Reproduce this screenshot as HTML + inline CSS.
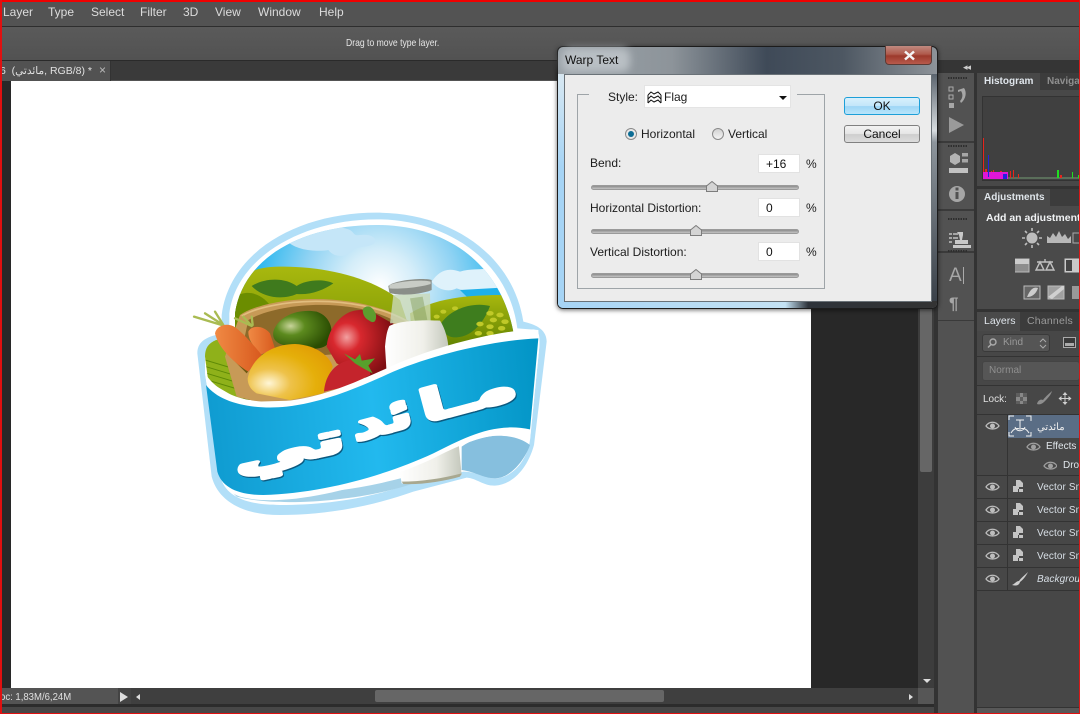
<!DOCTYPE html>
<html><head><meta charset="utf-8"><style>
html,body{margin:0;padding:0;width:1080px;height:714px;overflow:hidden;background:#535353}
body{position:relative;font-family:"Liberation Sans","Noto Sans CJK SC",sans-serif;font-size:11px;color:#e4e4e4}
.b{position:absolute;box-sizing:border-box}
.t{position:absolute;white-space:nowrap;line-height:14px}
.m{font-size:12px;top:5px;color:#dcdcdc}
.d{color:#1c1c1c;font-size:12px}
.in{position:absolute;background:#fff;width:42px;height:19px;left:758px;box-sizing:border-box;border:1px solid #e2e2e2;color:#111;font-size:12px;line-height:18px;padding-left:7px}
.tr{position:absolute;left:591px;width:208px;height:5px;border-radius:3px;background:linear-gradient(#8c8c8c,#c4c4c4);border:1px solid #9a9a9a;box-sizing:border-box}
.sep{position:absolute;left:977px;right:1px;height:1px;background:#333}
.v{position:absolute;left:1037px;font-size:10px;color:#d8dfe6;white-space:nowrap;line-height:12px;letter-spacing:.1px}
</style></head><body>
<!-- chrome -->
<div class="b" style="left:0;top:0;width:1080px;height:26px;background:#535353"></div>
<div class="b" style="left:0;top:26px;width:1080px;height:1px;background:#2e2e2e"></div>
<div class="b" style="left:0;top:27px;width:1080px;height:33px;background:linear-gradient(#5a5a5a,#525252)"></div>
<div class="b" style="left:0;top:60px;width:934px;height:20px;background:#3a3a3a;border-top:1px solid #2a2a2a"></div>
<div class="b" style="left:0;top:61px;width:111px;height:20px;background:#525252;border-right:1px solid #333"></div>
<span class="t m" style="left:3px">Layer</span><span class="t m" style="left:48px">Type</span><span class="t m" style="left:91px">Select</span><span class="t m" style="left:140px">Filter</span><span class="t m" style="left:183px">3D</span><span class="t m" style="left:215px">View</span><span class="t m" style="left:258px">Window</span><span class="t m" style="left:319px">Help</span>
<span class="t" style="left:346px;top:36px;font-size:10.5px;color:#e6e6e6;transform:scaleX(.82);transform-origin:0 0">Drag to move type layer.</span>
<span class="t" style="left:0;top:64px;font-size:10.5px;color:#e0e0e0;width:111px">6&nbsp;&nbsp;(مائدتي, RGB/8) *</span>
<span class="t" style="left:99px;top:63px;font-size:12px;color:#bbb">×</span>
<!-- canvas -->
<div class="b" style="left:0;top:81px;width:918px;height:607px;background:#282828"></div>
<div class="b" style="left:11px;top:81px;width:800px;height:607px;background:#fff"></div>
<div class="b" style="left:918px;top:81px;width:16px;height:607px;background:#3d3d3d"></div>
<div class="b" style="left:920px;top:120px;width:12px;height:352px;background:#666;border-radius:2px"></div>
<div class="b" style="left:923px;top:679px;width:0;height:0;border:4px solid transparent;border-top:4px solid #ddd;border-bottom:0"></div>
<!-- status -->
<div class="b" style="left:0;top:688px;width:934px;height:16px;background:#3f3f3f"></div>
<div class="b" style="left:0;top:688px;width:118px;height:16px;background:#545454"></div>
<div class="b" style="left:118px;top:688px;width:13px;height:16px;background:#444"></div>
<div class="b" style="left:120px;top:692px;width:0;height:0;border:5px solid transparent;border-left:8px solid #ddd;border-right:0"></div>
<div class="b" style="left:136px;top:694px;width:0;height:0;border:3px solid transparent;border-right:4px solid #ddd;border-left:0"></div>
<div class="b" style="left:909px;top:694px;width:0;height:0;border:3px solid transparent;border-left:4px solid #ddd;border-right:0"></div>
<div class="b" style="left:375px;top:690px;width:289px;height:12px;background:#666;border-radius:2px"></div>
<div class="b" style="left:918px;top:688px;width:16px;height:16px;background:#565656"></div>
<span class="t" style="left:0;top:690px;font-size:10.5px;color:#e0e0e0;transform:scaleX(.91);transform-origin:0 0">oc: 1,83M/6,24M</span>
<div class="b" style="left:0;top:704px;width:934px;height:3px;background:#2c2c2c"></div>
<div class="b" style="left:0;top:707px;width:934px;height:6px;background:#474747"></div>

<!-- logo -->
<svg style="position:absolute;left:180px;top:200px" width="380" height="330" viewBox="0 0 1140 990">
<defs>
<radialGradient id="sky" gradientUnits="userSpaceOnUse" cx="600" cy="260" r="390"><stop offset="0" stop-color="#fff"/><stop offset=".28" stop-color="#d4edf9"/><stop offset=".6" stop-color="#8ed2f3"/><stop offset="1" stop-color="#1fb4ee"/></radialGradient>
<linearGradient id="h1" x1="0" y1="0" x2="0" y2="1"><stop offset="0" stop-color="#a8b80e"/><stop offset="1" stop-color="#5d7f00"/></linearGradient>
<linearGradient id="ban" gradientUnits="userSpaceOnUse" x1="80" y1="700" x2="1080" y2="600"><stop offset="0" stop-color="#0f9bd0"/><stop offset=".5" stop-color="#22b9ee"/><stop offset="1" stop-color="#0395c6"/></linearGradient>
<radialGradient id="or" cx=".25" cy=".7" r=".85"><stop offset="0" stop-color="#fff6d6"/><stop offset=".3" stop-color="#eec24a"/><stop offset=".65" stop-color="#e5af0a"/><stop offset="1" stop-color="#e19c04"/></radialGradient>
<radialGradient id="ap" cx=".3" cy=".4" r=".7"><stop offset="0" stop-color="#f2a0a0"/><stop offset=".3" stop-color="#d8282e"/><stop offset="1" stop-color="#7e0e12"/></radialGradient>
<radialGradient id="gr" cx=".3" cy=".4" r=".7"><stop offset="0" stop-color="#c8d49a"/><stop offset=".35" stop-color="#5c8a1e"/><stop offset="1" stop-color="#2a4c02"/></radialGradient>
<linearGradient id="car" x1="0" y1="0" x2="1" y2="0"><stop offset="0" stop-color="#f08a44"/><stop offset="1" stop-color="#d85a1e"/></linearGradient>
<linearGradient id="milk" x1="0" y1="0" x2="1" y2="0"><stop offset="0" stop-color="#fff"/><stop offset=".6" stop-color="#f0f0ea"/><stop offset="1" stop-color="#c4c8bc"/></linearGradient>
<clipPath id="dome"><path d="M165 340C190 170 370 75 590 75C800 75 960 190 1000 395L800 440L620 520L400 600L190 600L165 500Z"/></clipPath>
<clipPath id="lf"><path d="M75 470C75 430 100 415 165 410L230 600L180 600L85 545Z"/></clipPath>
</defs>
<path fill="#b2dff8" d="M125 345C150 150 360 38 590 38C820 38 1000 170 1030 365C1060 372 1100 385 1100 425L1062 735C1040 815 990 855 945 857C910 858 890 835 860 833L700 875C560 925 420 945 300 945C190 945 115 905 95 830L52 460C52 420 85 410 125 400Z"/>
<path fill="#fff" d="M148 340C170 170 370 58 590 58C800 58 985 180 1012 385L1075 390L1078 440L1050 720C1040 790 990 835 945 835C910 835 890 815 850 815L680 855C550 900 420 915 300 915C200 915 135 890 122 830L75 520L75 470L148 400Z"/>
<g clip-path="url(#lf)"><rect x="70" y="410" width="170" height="200" fill="#8fb11a"/>
<path d="M75 480l100 30M78 500l100 30M80 520l100 30M82 540l100 30" stroke="#5e8a06" stroke-width="3" fill="none"/></g>
<g clip-path="url(#dome)">
<rect x="150" y="60" width="860" height="560" fill="url(#sky)"/>
<path fill="#c5e6f8" d="M320 122C370 90 470 70 510 90C525 100 520 108 540 105C580 100 595 120 580 132C560 145 530 135 515 155C490 175 460 170 445 150C420 155 350 155 320 122Z"/>
<path fill="#dff2fb" d="M755 245C775 215 800 200 840 215C870 205 900 210 925 205L980 210L985 265C930 260 880 285 830 265C800 280 770 265 755 245Z"/>
<path fill="#1fb0ea" d="M840 270L980 262L990 290L860 290Z" />
<path fill="url(#h1)" d="M150 320C175 215 220 200 310 200C430 200 570 230 660 300L700 420L400 600H150Z"/>
<path fill="#6b8d00" d="M150 300C200 260 250 280 280 330L200 420H150Z"/>
<path fill="#3f7a1d" d="M215 258C260 230 320 235 350 258C375 240 430 235 460 250C430 270 395 285 350 282C310 300 250 295 215 258Z"/>
<path fill="url(#h1)" d="M690 340C780 285 900 285 990 285L1010 450H700Z"/>
<path fill="#3e7d1e" d="M780 375C810 325 880 305 930 318C915 360 880 410 830 412C805 415 785 395 780 375Z"/>
<g fill="#c0c928"><ellipse cx="930" cy="340" rx="11" ry="7"/><ellipse cx="960" cy="345" rx="11" ry="7"/><ellipse cx="900" cy="372" rx="11" ry="7"/><ellipse cx="940" cy="360" rx="11" ry="7"/><ellipse cx="975" cy="365" rx="11" ry="7"/><ellipse cx="930" cy="380" rx="11" ry="7"/><ellipse cx="965" cy="385" rx="11" ry="7"/><ellipse cx="895" cy="400" rx="11" ry="7"/><ellipse cx="930" cy="400" rx="11" ry="7"/><ellipse cx="790" cy="335" rx="9" ry="6"/><ellipse cx="825" cy="325" rx="9" ry="6"/><ellipse cx="770" cy="350" rx="9" ry="6"/></g>
</g>
<!-- basket -->
<path fill="#c79a57" d="M180 345C260 290 520 265 690 365L640 520L400 600L230 605L170 590L135 470Z"/>
<path fill="#8d6a2a" d="M205 360C290 310 500 290 640 360L620 450L250 480L190 430Z"/>
<path fill="none" stroke="#e2bd7f" stroke-width="5" d="M185 348C270 298 520 275 685 365"/>
<path fill="#6e5a12" d="M165 430L215 500L200 520L150 470Z"/>
<path fill="url(#gr)" d="M280 395C295 345 360 325 410 335C455 350 465 400 445 430C425 455 375 445 340 440C300 437 275 425 280 395Z"/>
<path fill="url(#ap)" d="M440 440C445 380 490 330 540 330C575 325 610 360 640 370L630 510L560 535L470 490Z"/>
<path fill="#5d9d2e" d="M548 328C560 312 580 318 588 345C590 365 580 372 568 362C555 355 548 345 548 328Z"/>
<!-- carrots -->
<g fill="none" stroke="#a9bb52" stroke-width="7" stroke-linecap="round"><path d="M42 350L125 375M75 340L125 372M105 335L130 375M165 355L215 378M190 350L215 378M215 350L218 375"/></g>
<path fill="url(#car)" d="M205 395C215 375 250 375 270 400L285 445L240 465C225 440 205 425 205 395Z"/>
<path fill="url(#car)" d="M105 400C110 375 145 365 170 385C195 405 225 440 245 465L205 515C165 490 115 445 105 400Z"/>
<!-- orange -->
<path fill="url(#or)" d="M203 535C215 470 280 432 345 432C410 435 450 470 458 500L430 580L330 600L230 580C213 570 203 555 203 535Z"/>
<!-- strawberry -->
<path fill="#c4242c" d="M432 575C435 530 460 490 510 480C545 482 575 500 570 525L500 560Z"/>
<path fill="#57a02c" d="M492 460L525 478L540 462L545 482L585 475L565 497L578 520L550 505L525 490Z"/>
<!-- bottle -->
<path fill="#c9d8b8" d="M640 285L750 280L752 365L630 370Z" opacity=".8"/>
<path fill="#6e8a3a" d="M690 295L728 290L742 360L705 365Z" opacity=".35"/>
<path fill="url(#milk)" d="M628 378C660 360 740 360 780 362C795 385 805 420 805 445L620 520L615 440C618 410 620 395 628 378Z"/>
<path fill="#8a8e88" d="M625 258C640 240 735 232 755 240L755 270C720 285 650 288 628 278Z"/>
<path fill="#c8ccc6" d="M628 255C660 243 730 238 752 245L752 252C720 262 660 268 628 265Z"/>
<!-- lower bottle & lobe -->
<path fill="#86bfde" d="M845 740C900 700 1000 695 1050 735C1030 790 985 835 945 835C910 835 885 815 845 810Z"/>
<path fill="#a6d2e8" d="M130 850C300 900 500 880 680 830L700 850C560 900 300 925 170 890Z"/>
<path fill="url(#milk)" d="M655 790L835 720L845 825C790 845 720 855 665 850Z"/>
<path fill="#a8a890" d="M665 845C720 845 790 835 845 820L840 830C790 845 720 855 670 852Z"/>
<!-- white band + banner -->
<path fill="#fff" d="M75 520C120 590 210 610 300 605C420 595 520 550 620 505C760 440 940 395 1060 388C1078 390 1080 410 1078 440L1050 720C950 680 850 730 760 775C600 850 320 930 180 890C140 875 125 850 122 830Z"/>
<path fill="url(#ban)" d="M78 555C120 610 220 630 320 620C440 605 540 560 640 515C770 460 950 420 1075 415L1050 688C940 665 850 715 760 760C620 825 430 880 250 885C170 885 125 860 112 815Z"/>
<!-- arabic -->
<g font-family="'DejaVu Sans','Noto Sans CJK SC',sans-serif" font-weight="bold" text-anchor="middle" direction="rtl">
<g fill="#0b5a80" stroke="#0b5a80" stroke-width="11" stroke-linejoin="round">
<text transform="translate(878 634) rotate(-15) scale(1.7 1)" font-size="130">مـا</text>
<text transform="translate(618 703) rotate(-15) scale(1.55 1)" font-size="125">ئد</text>
<text transform="translate(338 790) rotate(-12) scale(1.95 1)" font-size="125">تي</text>
</g>
<g fill="#fff" stroke="#fff" stroke-width="11" stroke-linejoin="round">
<text transform="translate(875 630) rotate(-15) scale(1.7 1)" font-size="130">مـا</text>
<text transform="translate(615 699) rotate(-15) scale(1.55 1)" font-size="125">ئد</text>
<text transform="translate(335 786) rotate(-12) scale(1.95 1)" font-size="125">تي</text>
</g>
</g>
</svg>

<!-- right panels -->
<div class="b" style="left:934px;top:60px;width:146px;height:654px;background:#333"></div>
<div class="b" style="left:937px;top:60px;width:143px;height:13px;background:#353535"></div>
<span class="t" style="left:963px;top:60px;font-size:9px;color:#ccc;letter-spacing:-1px">◂◂</span>
<div class="b" style="left:938px;top:73px;width:36px;height:641px;background:#525252"></div>
<div class="b" style="left:938px;top:141px;width:36px;height:2px;background:#3a3a3a"></div>
<div class="b" style="left:938px;top:209px;width:36px;height:2px;background:#3a3a3a"></div>
<div class="b" style="left:938px;top:251px;width:36px;height:2px;background:#3a3a3a"></div>
<div class="b" style="left:938px;top:320px;width:36px;height:1px;background:#3a3a3a"></div>
<svg style="position:absolute;left:938px;top:73px" width="36" height="200" viewBox="0 0 36 200" fill="#a6a6a6">
<path d="M10 5h19M10 73h19M10 146h19 M10 178h19" stroke="#2e2e2e" stroke-width="2" stroke-dasharray="1.5 1"/>
<rect x="11" y="14" width="4" height="4" fill="none" stroke="#aaa"/><rect x="11" y="22" width="4" height="4" fill="none" stroke="#aaa"/><rect x="11" y="30" width="5" height="5"/>
<path d="M20 17l6-2c3 4 2 11-3 15l-1-2c3-3 3-7 1-10l-3 1z"/>
<path d="M11 44l15 8-15 8z" fill="#9a9a9a"/>
<path d="M12 83l5-3 5 3v6l-5 3-5-3z" fill="#ddd" opacity=".7"/><rect x="24" y="80" width="6" height="3.5"/><rect x="24" y="86" width="6" height="3.5"/><rect x="11" y="95" width="19" height="5" fill="#c2c2c2"/>
<circle cx="19" cy="121" r="8"/><rect x="17.500" y="119" width="3" height="7" fill="#525252"/><rect x="17.500" y="114.500" width="3" height="3" fill="#525252"/>
<rect x="11" y="160" width="3" height="2"/><rect x="15" y="160" width="5" height="2"/><rect x="11" y="164" width="3" height="2"/><rect x="15" y="164" width="5" height="2"/><rect x="11" y="168" width="3" height="2"/>
<path d="M19 159h6v3l-1 5h6v4H17v-4h5l-1-5z M15 172h18v3H15z" fill="#c8c8c8"/>
</svg>
<span class="t" style="left:949px;top:266px;font-size:19px;line-height:20px;color:#a6a6a6">A</span><div class="b" style="left:963px;top:267px;width:1px;height:17px;background:#aaa"></div>
<span class="t" style="left:949px;top:294px;font-size:17px;line-height:20px;color:#a6a6a6;font-weight:bold">¶</span>

<!-- histogram -->
<div class="b" style="left:977px;top:90px;width:102px;height:97px;background:#484848"></div>
<div class="b" style="left:977px;top:73px;width:63px;height:18px;background:#484848"></div>
<div class="b" style="left:1040px;top:73px;width:39px;height:17px;background:#3c3c3c"></div>
<span class="t" style="left:984px;top:75px;font-size:10px;font-weight:bold;color:#e0e6ec">Histogram</span>
<span class="t" style="left:1047px;top:75px;font-size:10px;font-weight:bold;color:#8f8f8f">Navigator</span>
<div class="b" style="left:982px;top:96px;width:97px;height:85px;background:#404040;border:1px solid #333;border-right:0"></div>
<svg style="position:absolute;left:983px;top:97px" width="96" height="83" viewBox="0 0 96 83">
<rect x="0" y="80" width="96" height="2" fill="#5a6e5a"/>
<g fill="#e8241c"><rect x="0" y="41" width="1" height="41"/><rect x="2" y="72" width="2" height="9"/><rect x="8" y="74" width="1" height="8"/><rect x="10" y="73" width="1" height="8"/><rect x="14" y="75" width="1" height="6"/><rect x="17" y="74" width="2" height="7"/><rect x="24" y="76" width="1" height="5"/><rect x="27" y="74" width="1" height="7"/><rect x="30" y="73" width="1" height="8"/><rect x="35" y="77" width="1" height="4"/><rect x="77" y="78" width="2" height="3"/></g>
<rect x="0" y="75" width="25" height="7" fill="#e016d8"/><rect x="5" y="58" width="1" height="22" fill="#2222dd"/><rect x="20" y="77" width="4" height="5" fill="#2222dd"/>
<g fill="#1fe01f"><rect x="74" y="73" width="2" height="8"/><rect x="89" y="75" width="1" height="6"/><rect x="95" y="78" width="1" height="3"/></g>
</svg>
<!-- adjustments -->
<div class="b" style="left:977px;top:186px;width:102px;height:3px;background:#333"></div>
<div class="b" style="left:977px;top:189px;width:102px;height:121px;background:#3c3c3c"></div>
<div class="b" style="left:977px;top:189px;width:73px;height:18px;background:#4a4a4a"></div>
<div class="b" style="left:977px;top:206px;width:102px;height:103px;background:#4a4a4a"></div>
<span class="t" style="left:984px;top:191px;font-size:10px;font-weight:bold;color:#dfe5ea">Adjustments</span>
<span class="t" style="left:986px;top:211px;font-size:10.5px;font-weight:bold;color:#f0f2f4">Add an adjustment</span>
<svg style="position:absolute;left:1015px;top:225px" width="65" height="80" viewBox="0 0 65 80">
<circle cx="17" cy="13" r="5.500" fill="#bdbdbd"/><path d="M17 3v3M17 20v3M7 13h3M24 13h3M10 6l2 2M22 18l2 2M10 20l2-2M22 8l2-2" stroke="#bdbdbd" stroke-width="1.600"/>
<path d="M32 18v-7l3 2 3-5 3 4 3-6 3 6 3-3 3 5 3-3v7z" fill="#b8b8b8"/>
<rect x="58" y="8" width="8" height="10" fill="none" stroke="#aaa"/>
<rect x="-3" y="34" width="17" height="13" fill="#8d8d8d" stroke="#bbb"/><rect x="-3" y="34" width="17" height="5" fill="#ccc"/>
<path d="M30 34v3M22 37h16M25 37l-4 8h8zM35 37l-4 8h8z" stroke="#c0c0c0" fill="none" stroke-width="1.400"/>
<rect x="50" y="34" width="15" height="13" fill="#c8c8c8" stroke="#ccc"/><rect x="51" y="35" width="6" height="11" fill="#444"/>
<rect x="9" y="61" width="16" height="13" fill="#666" stroke="#bbb"/><path d="M12 72c4-10 8-10 11-9-2 6-6 9-11 9z" fill="#ccc"/>
<rect x="33" y="61" width="16" height="13" fill="#a0a0a0" stroke="#bbb"/><path d="M33 72l14-11h2v3l-12 10z" fill="#d0d0d0"/>
<rect x="57" y="61" width="10" height="13" fill="#999"/>
</svg>
<!-- layers -->
<div class="b" style="left:977px;top:309px;width:102px;height:3px;background:#333"></div>
<div class="b" style="left:977px;top:312px;width:102px;height:19px;background:#3c3c3c"></div>
<div class="b" style="left:977px;top:312px;width:43px;height:19px;background:#4a4a4a"></div>
<div class="b" style="left:977px;top:331px;width:102px;height:376px;background:#474747"></div>
<span class="t" style="left:984px;top:314px;font-size:10.5px;color:#e0e6ec">Layers</span>
<span class="t" style="left:1027px;top:314px;font-size:10.5px;color:#9a9a9a;letter-spacing:.2px">Channels</span>
<div class="b" style="left:982px;top:334px;width:68px;height:18px;background:#555;border:1px solid #3a3a3a;border-radius:3px"></div>
<span class="t" style="left:1003px;top:336px;font-size:10px;color:#999">Kind</span>
<svg style="position:absolute;left:986px;top:337px" width="68" height="14" fill="none" stroke="#aaa" stroke-width="1.400"><circle cx="7" cy="5" r="3"/><path d="M5 7.500l-3 3"/><path d="M54 5l3-3 3 3M54 8l3 3 3-3" stroke-width="1"/></svg>
<div class="b" style="left:1063px;top:337px;width:13px;height:11px;background:#3a3a3a;border:1px solid #aaa"></div>
<div class="b" style="left:1065px;top:343px;width:9px;height:3px;background:#aaa"></div>
<div class="sep" style="top:356px"></div>
<div class="b" style="left:982px;top:361px;width:98px;height:20px;background:#565656;border:1px solid #444;border-radius:3px"></div>
<span class="t" style="left:989px;top:364px;font-size:10px;color:#8f8f8f">Normal</span>
<div class="sep" style="top:385px"></div>
<span class="t" style="left:983px;top:393px;font-size:10px;color:#e0e0e0">Lock:</span>
<svg style="position:absolute;left:1015px;top:390px" width="65" height="18" viewBox="0 0 65 18">
<rect x="1" y="3" width="11" height="11" fill="#888"/><path d="M1 3h4v4H1zM8 3h4v4H8zM5 7h3v4H5zM1 11h4v3H1zM8 11h4v3H8z" fill="#5e5e5e"/>
<path d="M22 14c1-4 4-5 6-4 3-4 7-7 9-9-1 4-5 8-8 11-2 2-5 3-7 2z" fill="#8e8e8e"/>
<path d="M50 2l2.500 3h-2v3h3v-2l3 2.500-3 2.500v-2h-3v3h2l-2.500 3-2.500-3h2v-3h-3v2l-3-2.500 3-2.500v2h3v-3h-2z" fill="#cfcfcf"/>
</svg>
<div class="sep" style="top:414px"></div>
<div class="b" style="left:1008px;top:415px;width:71px;height:23px;background:#5a6d85"></div>
<div class="b" style="left:1007px;top:415px;width:1px;height:175px;background:#333"></div>
<svg style="position:absolute;left:1008px;top:415px" width="24" height="22" viewBox="0 0 24 22" fill="none" stroke="#f2f2f2"><path d="M1 5V1h5M18 1h5v5M1 17v4h5M23 17v4h-5"/><path d="M8 5h8M12 5v8M7 12c2 5 8 5 10 0M3 18c3-5 6-5 9-4 3-1 6-1 9 4" stroke-width="1"/></svg>
<span class="t" style="left:1037px;top:421px;font-size:10px;color:#eee;line-height:13px">مائدتي</span>
<span class="t" style="left:1046px;top:440px;font-size:10px;color:#dfe5ea;line-height:13px">Effects</span>
<span class="t" style="left:1063px;top:459px;font-size:10px;color:#dfe5ea;line-height:13px">Drop S</span>
<div class="sep" style="top:475px"></div><div class="sep" style="top:498px"></div><div class="sep" style="top:521px"></div><div class="sep" style="top:544px"></div><div class="sep" style="top:567px"></div><div class="sep" style="top:590px"></div>
<span class="v" style="top:482px">Vector Smart</span><span class="v" style="top:505px">Vector Smart</span><span class="v" style="top:528px">Vector Smart</span><span class="v" style="top:551px">Vector Smart</span>
<span class="v" style="top:574px;font-style:italic">Background</span>
<svg style="position:absolute;left:985px;top:420px" width="72" height="170" viewBox="0 0 72 170" fill="none">
<g stroke="#bdbdbd" stroke-width="1.300"><path d="M1 6c3-5 10-5 13 0-3 4-10 4-13 0z"/><circle cx="7.500" cy="6" r="2.500" fill="#bdbdbd" stroke="none"/></g>
<g stroke="#9f9f9f" stroke-width="1.300" transform="translate(41,21)"><path d="M1 6c3-5 10-5 13 0-3 4-10 4-13 0z"/><circle cx="7.500" cy="6" r="2.500" fill="#9f9f9f" stroke="none"/></g>
<g stroke="#9f9f9f" stroke-width="1.300" transform="translate(58,40)"><path d="M1 6c3-5 10-5 13 0-3 4-10 4-13 0z"/><circle cx="7.500" cy="6" r="2.500" fill="#9f9f9f" stroke="none"/></g>
<g stroke="#bdbdbd" stroke-width="1.300" transform="translate(0,61)"><path d="M1 6c3-5 10-5 13 0-3 4-10 4-13 0z"/><circle cx="7.500" cy="6" r="2.500" fill="#bdbdbd" stroke="none"/></g>
<g stroke="#bdbdbd" stroke-width="1.300" transform="translate(0,84)"><path d="M1 6c3-5 10-5 13 0-3 4-10 4-13 0z"/><circle cx="7.500" cy="6" r="2.500" fill="#bdbdbd" stroke="none"/></g>
<g stroke="#bdbdbd" stroke-width="1.300" transform="translate(0,107)"><path d="M1 6c3-5 10-5 13 0-3 4-10 4-13 0z"/><circle cx="7.500" cy="6" r="2.500" fill="#bdbdbd" stroke="none"/></g>
<g stroke="#bdbdbd" stroke-width="1.300" transform="translate(0,130)"><path d="M1 6c3-5 10-5 13 0-3 4-10 4-13 0z"/><circle cx="7.500" cy="6" r="2.500" fill="#bdbdbd" stroke="none"/></g>
<g stroke="#bdbdbd" stroke-width="1.300" transform="translate(0,153)"><path d="M1 6c3-5 10-5 13 0-3 4-10 4-13 0z"/><circle cx="7.500" cy="6" r="2.500" fill="#bdbdbd" stroke="none"/></g>
</svg>
<svg style="position:absolute;left:1012px;top:478px" width="14" height="112" viewBox="0 0 14 112" fill="#c4c4c4">
<path d="M4 2h4l3 3v4H7v2H4zM1 8h5v6H1zM7 11h4v3H7z"/>
<path transform="translate(0,23)" d="M4 2h4l3 3v4H7v2H4zM1 8h5v6H1zM7 11h4v3H7z"/>
<path transform="translate(0,46)" d="M4 2h4l3 3v4H7v2H4zM1 8h5v6H1zM7 11h4v3H7z"/>
<path transform="translate(0,69)" d="M4 2h4l3 3v4H7v2H4zM1 8h5v6H1zM7 11h4v3H7z"/>
</svg>
<svg style="position:absolute;left:1010px;top:570px" width="20" height="18" viewBox="0 0 20 18" fill="#cfcfcf"><path d="M18 2c-3 3-7 6-9 9-3 0-4 3-7 4 3 1 7 1 8-3 3-2 6-6 8-10z"/></svg>
<div class="b" style="left:977px;top:707px;width:102px;height:6px;background:#585858;border-top:1px solid #333"></div>

<!-- dialog -->
<div class="b" style="left:557px;top:46px;width:381px;height:263px;border-radius:6px;border:1px solid #1c1c1c;background:linear-gradient(90deg,#9aa2a8 0,#8d949a 30%,#3f4a58 55%,#4d5762 75%,#8d9399 100%);box-shadow:0 1px 5px rgba(0,0,0,.6)"></div>
<div class="b" style="left:558px;top:74px;width:7px;height:234px;background:linear-gradient(#d8e8f2,#a6d4f5 40%,#a6d4f5);border-radius:0 0 0 5px"></div>
<div class="b" style="left:558px;top:301px;width:379px;height:7px;background:linear-gradient(90deg,#a6d4f5 0,#c4e2f4 60%,#2e333a 66%,#333 100%);border-radius:0 0 5px 5px"></div>
<div class="b" style="left:932px;top:74px;width:5px;height:227px;background:linear-gradient(#5b646e,#d8dde0 25%,#8d959c 30%,#3a4149 100%)"></div>
<div class="b" style="left:562px;top:48px;width:68px;height:24px;background:#b9bfc4;filter:blur(4px);border-radius:8px"></div>
<span class="t" style="left:565px;top:53px;font-size:12px;color:#111">Warp Text</span>
<div class="b" style="left:885px;top:46px;width:47px;height:19px;background:linear-gradient(#c08a80 0,#b05a4c 45%,#9c3a2c 55%,#b85a4c 100%);border:1px solid #5c3a34;border-top:0;border-radius:0 0 4px 4px"></div>
<svg style="position:absolute;left:902px;top:50px" width="15" height="11"><path d="M3 1.500l9 8M12 1.500l-9 8" stroke="#f4f4f4" stroke-width="2.500"/></svg>
<div class="b" style="left:564px;top:74px;width:368px;height:228px;background:#ececec;border:1px solid #6a7278"></div>
<div class="b" style="left:577px;top:94px;width:248px;height:195px;border:1px solid #9ea4a8"></div>
<div class="b" style="left:589px;top:90px;width:208px;height:8px;background:#ececec"></div>
<span class="t d" style="left:608px;top:90px">Style:</span>
<div class="b" style="left:644px;top:85px;width:147px;height:23px;background:#fff;border:1px solid #e4e4e4"></div>
<svg style="position:absolute;left:647px;top:90px" width="16" height="15" fill="none" stroke="#111"><path d="M1 5l3-3 3 2 4-2 3 3M1 9l3-3 3 2 4-2 3 3M1 13l3-3 3 2 4-2 3 3M1 5v8M14 5v8"/></svg>
<span class="t d" style="left:664px;top:90px">Flag</span>
<div class="b" style="left:779px;top:96px;width:0;height:0;border:4px solid transparent;border-top:4px solid #111;border-bottom:0"></div>
<div class="b" style="left:625px;top:128px;width:12px;height:12px;border-radius:50%;background:#e8e8e8;border:1px solid #8a8a8a"></div>
<div class="b" style="left:628px;top:131px;width:6px;height:6px;border-radius:50%;background:#0c6c94"></div>
<span class="t d" style="left:641px;top:127px">Horizontal</span>
<div class="b" style="left:712px;top:128px;width:12px;height:12px;border-radius:50%;background:linear-gradient(#d2d2d2,#f4f4f4);border:1px solid #8a8a8a"></div>
<span class="t d" style="left:728px;top:127px">Vertical</span>
<span class="t d" style="left:590px;top:156px">Bend:</span>
<div class="in" style="top:154px">+16</div><span class="t d" style="left:806px;top:157px">%</span>
<div class="tr" style="top:185px"></div>
<svg style="position:absolute;left:706px;top:181px" width="12" height="11"><path d="M.5 10.500V5L6 .5 11.500 5v5.500z" fill="#d4d4d4" stroke="#7d7d7d"/></svg>
<span class="t d" style="left:590px;top:201px">Horizontal Distortion:</span>
<div class="in" style="top:198px">0</div><span class="t d" style="left:806px;top:201px">%</span>
<div class="tr" style="top:229px"></div>
<svg style="position:absolute;left:690px;top:225px" width="12" height="11"><path d="M.5 10.500V5L6 .5 11.500 5v5.500z" fill="#d4d4d4" stroke="#7d7d7d"/></svg>
<span class="t d" style="left:590px;top:245px">Vertical Distortion:</span>
<div class="in" style="top:242px">0</div><span class="t d" style="left:806px;top:245px">%</span>
<div class="tr" style="top:273px"></div>
<svg style="position:absolute;left:690px;top:269px" width="12" height="11"><path d="M.5 10.500V5L6 .5 11.500 5v5.500z" fill="#d4d4d4" stroke="#7d7d7d"/></svg>
<div class="b" style="left:844px;top:97px;width:76px;height:18px;border:1px solid #1d9fd8;border-radius:3px;background:linear-gradient(#d8f0fc 0,#c2e6fa 50%,#9ed6f6 52%,#b8e4fa 100%);color:#111;text-align:center;font-size:12px;line-height:16px">OK</div>
<div class="b" style="left:844px;top:125px;width:76px;height:18px;border:1px solid #808080;border-radius:3px;background:linear-gradient(#f2f2f2 0,#e6e6e6 48%,#cecece 52%,#dcdcdc 100%);color:#111;text-align:center;font-size:12px;line-height:17px">Cancel</div>

<!-- red frame -->
<div class="b" style="left:0;top:0;width:1080px;height:2px;background:#f00000"></div>
<div class="b" style="left:0;top:0;width:2px;height:714px;background:#e01010"></div>
<div class="b" style="left:1079px;top:0;width:1px;height:714px;background:#d81818"></div>
<div class="b" style="left:0;top:713px;width:1080px;height:1px;background:#e01010"></div>
</body></html>
